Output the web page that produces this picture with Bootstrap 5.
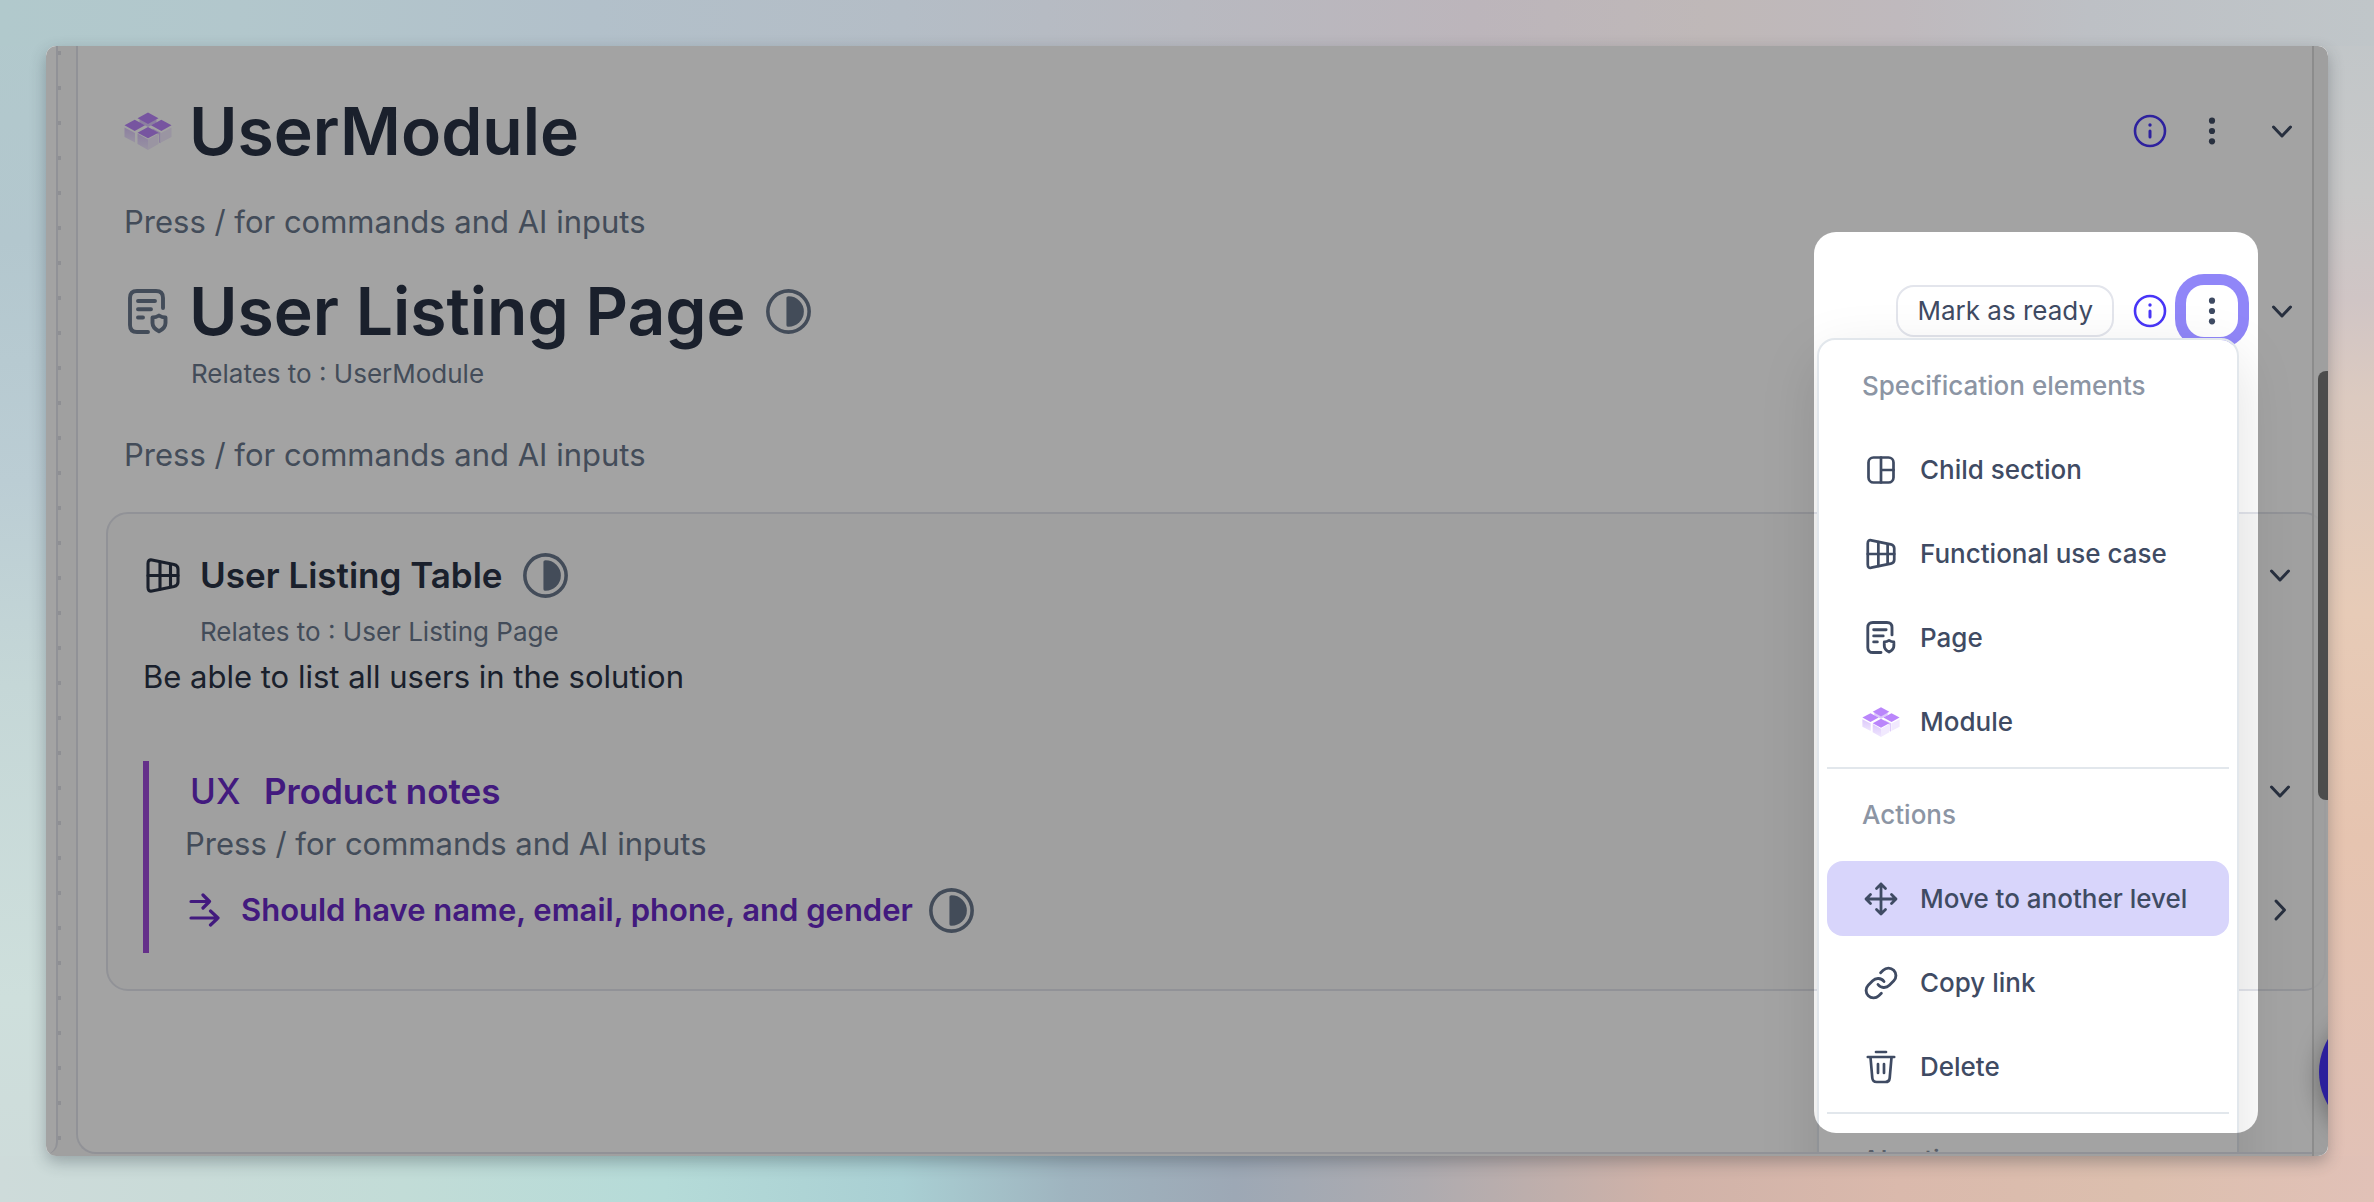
<!DOCTYPE html>
<html lang="en">
<head>
<meta charset="utf-8">
<meta name="viewport" content="width=device-width, initial-scale=1">
<title>UserModule – User Listing Page</title>
<link href="https://cdn.jsdelivr.net/npm/bootstrap@5.3.0/dist/css/bootstrap.min.css" rel="stylesheet">
<style>
  :root {
    --ink: #2a3345;
    --ink-soft: #3f4b63;
    --muted: #69778c;
    --line: #e3e5ec;
    --blue: #4835f7;
    --violet: #6829c5;
  }
  body {
    font-family: Inter, "Liberation Sans", sans-serif;
    font-size: 31px;
    line-height: 48px;
    color: var(--ink);
    background:
      linear-gradient(90deg, #b1c9cc, #b2c7cc 10%, #b2c0ca 25%, #b4bdc6 38%, #b8b9c0 50%, #bcb5bb 62%, #bfb8b8 72%, #bfb9bd 80%, #bdc0c5 88%, #c0c6c9) 0 0 / 100% 46px no-repeat,
      linear-gradient(90deg, #cedbda, #c9dbd8 8%, #c2dcd7 17%, #b5dbd8 28%, #a9cfd3 38%, #9fb4bf 45%, #9da8b5 52%, #aeabaf 60%, #d0b2a8 70%, #dab9ac 80%, #dcbfae 90%, #e1c1b7) 0 100% / 100% 46px no-repeat,
      linear-gradient(180deg, #b1c9cc, #b3c7ce 20%, #bbcdd4 40%, #c5d7d7 57%, #cedfdc 83%, #cedbda) 0 0 / 50% 100% no-repeat,
      linear-gradient(180deg, #c0c6c9, #c8c8c8 16%, #d0c5c5 25%, #dccac0 33%, #e7cbb7 51%, #e6c4b0 70%, #e1c1b7) 100% 0 / 50% 100% no-repeat;
  }
  .stage { padding: 46px; }
  .app-frame {
    background: #fafafa;
    border-radius: 10px;
    box-shadow: 0 6px 16px rgba(40, 50, 60, .32);
    padding-bottom: 2px;
  }
  .rail { width: 12px; background: #fff; border-right: 2px solid var(--line); border-bottom-right-radius: 14px; }
  .rail-dots { width: 18px; background: repeating-linear-gradient(180deg, transparent 0 5px, #dfe0e7 5px 9px, transparent 9px 35px) 0 0 / 3px 100% no-repeat; }
  .sheet {
    background: #fff;
    border: solid var(--line);
    border-width: 0 0 2px 2px;
    border-bottom-left-radius: 20px;
    padding: 45px 25px 30px 46px;
  }
  .scroll-track { width: 16px; background: rgba(248, 248, 248, .85); border-left: 2px solid #dcdcdc; }
  .scroll-thumb { top: 325px; width: 10px; height: 429px; background: #787878; border-radius: 8px 0 0 8px; }
  .fab { top: 961px; right: -121px; width: 130px; height: 130px; background: #4431f4; box-shadow: 0 6px 24px rgba(0, 0, 0, .35); }

  svg { display: block; flex: none; fill: none; stroke: currentColor; stroke-linecap: round; stroke-linejoin: round; }
  .icon-btn { width: 42px; height: 42px; padding: 0; border: 0; color: var(--ink-soft); display: flex; align-items: center; justify-content: center; }
  .icon-btn.info { color: var(--blue); }
  .head-icon { width: 48px; display: flex; justify-content: center; color: var(--muted); }
  .case-icon { width: 40px; display: flex; justify-content: center; }
  .state-icon { color: var(--muted); }
  .page-title { font-size: 66px; line-height: 80px; font-weight: 600; color: var(--ink); margin: 0; }
  .card-title-row { font-size: 35px; line-height: 52px; font-weight: 600; }
  .rule-title { font-size: 31px; line-height: 52px; font-weight: 600; }
  .relates { font-size: 26px; line-height: 40px; color: var(--muted); }
  .relates a { color: inherit; text-decoration: none; }
  .hint { color: var(--muted); margin: 0; }
  .section-hint { margin: 27px 0 25px; }
  .page-relates { margin: 3px 0 0 67px; }
  .page-hint { margin-top: 37px; }
  .case-relates { margin: 11px 0 1px 57px; }
  .notes-hint { margin: 3px 0 16px 1px; }
  .head-actions { gap: 20px; }
  .gap-title { gap: 20px; }
  .gap-icon { gap: 17px; }

  .use-case {
    background: #fafafa;
    border: 2px solid var(--line);
    border-radius: 22px;
    margin: 33px -23px 0 -18px;
    padding: 35px 23px 36px 35px;
  }
  .notes { border-left: 6px solid #9e4bd8; padding: 4px 0 17px 35px; margin-top: 60px; }
  .violet { color: var(--violet); }
  .ux-mark { width: 74px; margin-left: 6px; font-weight: 500; }

  .ready-btn {
    font-size: 26px; line-height: 36px; color: var(--ink-soft); background: #fff;
    border: 2px solid var(--line); border-radius: 18px; padding: 6px 19px; margin-right: -5px;
  }
  .more-btn { width: 52px; height: 52px; margin: 0 -5px; background: #fff; border-radius: 18px; box-shadow: 0 0 0 11px #9086f8; }
  .more-menu {
    top: 53px; right: -6px; width: 422px; padding: 8px; gap: 9px;
    border: 2px solid #e2e7ec; border-radius: 18px;
    box-shadow: 0 20px 60px rgba(0, 0, 0, .12);
    z-index: 2;
  }
  .more-menu .dropdown-header, .more-menu .dropdown-item { padding: 0 0 0 35px; height: 75px; font-size: 26px; font-weight: 500; display: flex; align-items: center; line-height: 36px; }
  .more-menu .dropdown-header { color: #8c95a4; margin: 0; }
  .more-menu .dropdown-item { color: var(--ink-soft); border-radius: 16px; gap: 20px; }
  .more-menu .dropdown-item.active { background: #d8d5fb; }
  .more-menu .dropdown-divider { margin: -1px 0; border-top: 2px solid #e2e7ec; opacity: 1; }
  .menu-icon { width: 38px; display: flex; justify-content: center; }

  .spotlight {
    top: 186px; right: 70px; width: 444px; height: 901px; border-radius: 22px;
    box-shadow: 0 0 0 3000px rgba(0, 0, 0, .36); z-index: 5; pointer-events: none;
  }
</style>
</head>
<body>
<svg width="0" height="0" class="position-absolute" aria-hidden="true">
  <defs>
    <linearGradient id="side" x1="0" y1="0" x2="0" y2="1"><stop offset="0" stop-color="#dcc8fb"/><stop offset="1" stop-color="#efe6fe"/></linearGradient>
    <symbol id="i-info" viewBox="0 0 34 34"><circle cx="17" cy="17" r="15" stroke-width="2.6"/><path d="M17 17v6" stroke-width="3"/><circle cx="17" cy="11" r="1.7" fill="currentColor" stroke="none"/></symbol>
    <symbol id="i-dots" viewBox="0 0 42 42"><g fill="currentColor" stroke="none"><circle cx="21" cy="10.7" r="3.1"/><circle cx="21" cy="21" r="3.1"/><circle cx="21" cy="31.3" r="3.1"/></g></symbol>
    <symbol id="i-down" viewBox="0 0 42 42"><path d="M12.5 17l8.5 9 8.5-9" stroke-width="3"/></symbol>
    <symbol id="i-right" viewBox="0 0 42 42"><path d="M17 12l8.5 9-8.5 9" stroke-width="3"/></symbol>
    <symbol id="i-cubes" viewBox="0 0 48 38">
      <g stroke="none">
        <path d="M0.5 15.5l10.5 5.5v9.5L0.5 25z" fill="url(#side)"/>
        <path d="M47.5 15.5l-10.5 5.5v9.5l10.5-5.5z" fill="#f1e9fe"/>
        <path d="M13.5 21.5l10.5 6v10.5l-10.5-6z" fill="url(#side)"/>
        <path d="M34.5 21.5l-10.5 6v10.5l10.5-6z" fill="#f1e9fe"/>
        <path d="M36.5 20.5l-8-4v3l6.5 3v8l1.5 .7z" fill="#dcc8fb"/>
        <path d="M24 15l-8.5-4.500v-3h17v3z" fill="#dcc8fb"/>
        <g fill="#ba86fb">
          <path d="M24 .5l10.5 5.7L24 12 13.5 6.2z"/>
          <path d="M10.7 7.8L21 13.3 10.7 19 .5 13.3z"/>
          <path d="M37.3 7.8l10.2 5.5L37.3 19 27 13.3z"/>
          <path d="M24 15l10.5 5.7L24 26.3 13.5 20.7z"/>
        </g>
      </g>
    </symbol>
    <symbol id="i-page" viewBox="0 0 40 45"><g stroke-width="3.9"><path d="M35 19V9q0-7-7-7H9Q2 2 2 9v27q0 7 7 7h11"/><path d="M10 12h17M10 20.3h13M10 28.5h5"/><path d="M31 26.5q-3 2-6.500 2v5.5q0 5 6.5 8.3 6.5-3.3 6.5-8.3v-5.5q-3.500 0-6.500-2z"/></g></symbol>
    <symbol id="i-window" viewBox="0 0 34 35"><g stroke-width="3.1"><path d="M2 5.5Q2 1.3 6 2l22 4.500q4 1 4 4.500v13q0 3.5-4 4.5L6 33q-4 .7-4-3.5z"/><path d="M14 4v27M24.5 6.5v22M2 17.5h30"/></g></symbol>
    <symbol id="i-section" viewBox="0 0 28 28"><g stroke-width="2.7"><rect x="1.5" y="1.5" width="25" height="25" rx="5"/><path d="M14 1.5v25M14 14h12.5"/></g></symbol>
    <symbol id="i-half" viewBox="0 0 44 44"><circle cx="22" cy="22" r="20.2" stroke-width="3.5"/><path d="M20 8.500q0-1.500 2-1.500a15 15 0 0 1 0 30q-2 0-2-1.500z" fill="currentColor" stroke="none"/></symbol>
    <symbol id="i-flow" viewBox="0 0 31 34"><path d="M2 8.5h18.500M14 2l6.500 6.500L14 15M2 25h27M21.500 18l7.500 7-7.500 7" stroke-width="3.2"/></symbol>
    <symbol id="i-move" viewBox="0 0 34 34"><path d="M17 2v30M2 17h30M12.5 6.500L17 2l4.500 4.500M12.500 27.500L17 32l4.500-4.500M6.500 12.500L2 17l4.500 4.500M27.500 12.500L32 17l-4.500 4.500" stroke-width="2.8"/></symbol>
    <symbol id="i-link" viewBox="0 0 24 24"><path d="M10 13a5 5 0 0 0 7.54.54l3-3a5 5 0 0 0-7.07-7.07l-1.72 1.71M14 11a5 5 0 0 0-7.54-.54l-3 3a5 5 0 0 0 7.07 7.07l1.71-1.71" stroke-width="1.9"/></symbol>
    <symbol id="i-trash" viewBox="0 0 30 34"><path d="M1.8 7h26.4M10 2h10M4.500 7.500l1.800 20.500q.4 4 4.400 4h8.600q4 0 4.400-4l1.800-20.500M12 14v9M18 14v9" stroke-width="2.7"/></symbol>
  </defs>
</svg>

<div class="stage min-vh-100 d-flex">
  <main class="app-frame flex-grow-1 d-flex position-relative overflow-hidden">
    <div class="rail flex-shrink-0"></div>
    <div class="rail-dots flex-shrink-0"></div>

    <div class="sheet flex-grow-1 overflow-hidden">
      <header class="d-flex align-items-center justify-content-between">
        <div class="d-flex align-items-center gap-icon">
          <span class="head-icon"><svg width="48" height="38"><use href="#i-cubes"/></svg></span>
          <h1 class="page-title">UserModule</h1>
        </div>
        <div class="head-actions d-flex align-items-center">
          <button type="button" class="btn icon-btn info" aria-label="Info"><svg width="34" height="34"><use href="#i-info"/></svg></button>
          <button type="button" class="btn icon-btn" aria-label="More"><svg width="42" height="42"><use href="#i-dots"/></svg></button>
          <button type="button" class="btn icon-btn ms-2" aria-label="Collapse"><svg width="42" height="42"><use href="#i-down"/></svg></button>
        </div>
      </header>
      <p class="hint section-hint">Press / for commands and AI inputs</p>

      <header class="d-flex align-items-center justify-content-between">
        <div class="d-flex align-items-center gap-icon">
          <span class="head-icon"><svg width="40" height="45"><use href="#i-page"/></svg></span>
          <div class="d-flex align-items-center gap-title">
            <h1 class="page-title">User Listing Page</h1>
            <svg class="state-icon" width="45" height="45"><use href="#i-half"/></svg>
          </div>
        </div>
        <div class="head-actions d-flex align-items-center">
          <button type="button" class="btn ready-btn">Mark as ready</button>
          <button type="button" class="btn icon-btn info" aria-label="Info"><svg width="34" height="34"><use href="#i-info"/></svg></button>
          <div class="dropdown">
            <button type="button" class="btn icon-btn more-btn" aria-label="More" aria-expanded="true"><svg width="42" height="42"><use href="#i-dots"/></svg></button>
            <div class="dropdown-menu show more-menu d-flex flex-column">
              <h2 class="dropdown-header">Specification elements</h2>
              <button type="button" class="dropdown-item"><span class="menu-icon"><svg width="28" height="28"><use href="#i-section"/></svg></span>Child section</button>
              <button type="button" class="dropdown-item"><span class="menu-icon"><svg width="30" height="34"><use href="#i-window"/></svg></span>Functional use case</button>
              <button type="button" class="dropdown-item"><span class="menu-icon"><svg width="30" height="33"><use href="#i-page"/></svg></span>Page</button>
              <button type="button" class="dropdown-item"><span class="menu-icon"><svg width="38" height="32"><use href="#i-cubes"/></svg></span>Module</button>
              <hr class="dropdown-divider">
              <h2 class="dropdown-header">Actions</h2>
              <button type="button" class="dropdown-item active"><span class="menu-icon"><svg width="34" height="34"><use href="#i-move"/></svg></span>Move to another level</button>
              <button type="button" class="dropdown-item"><span class="menu-icon"><svg width="36" height="36"><use href="#i-link"/></svg></span>Copy link</button>
              <button type="button" class="dropdown-item"><span class="menu-icon"><svg width="30" height="34"><use href="#i-trash"/></svg></span>Delete</button>
              <hr class="dropdown-divider">
              <h2 class="dropdown-header">AI actions</h2>
            </div>
          </div>
          <button type="button" class="btn icon-btn ms-2" aria-label="Collapse"><svg width="42" height="42"><use href="#i-down"/></svg></button>
        </div>
      </header>
      <div class="relates page-relates">Relates to : <a href="#">UserModule</a></div>
      <p class="hint page-hint">Press / for commands and AI inputs</p>

      <section class="use-case">
        <div class="card-title-row d-flex align-items-center justify-content-between">
          <div class="d-flex align-items-center gap-icon">
            <span class="case-icon"><svg width="34" height="35"><use href="#i-window"/></svg></span>
            <span class="d-flex align-items-center gap-title">User Listing Table <svg class="state-icon" width="45" height="45"><use href="#i-half"/></svg></span>
          </div>
          <button type="button" class="btn icon-btn" aria-label="Collapse"><svg width="42" height="42"><use href="#i-down"/></svg></button>
        </div>
        <div class="relates case-relates">Relates to : <a href="#">User Listing Page</a></div>
        <div>Be able to list all users in the solution</div>

        <div class="notes">
          <div class="card-title-row violet d-flex align-items-center justify-content-between">
            <div class="d-flex align-items-center"><span class="ux-mark">UX</span>Product notes</div>
            <button type="button" class="btn icon-btn" aria-label="Collapse"><svg width="42" height="42"><use href="#i-down"/></svg></button>
          </div>
          <p class="hint notes-hint">Press / for commands and AI inputs</p>
          <div class="rule-title violet d-flex align-items-center justify-content-between">
            <div class="d-flex align-items-center gap-icon">
              <span class="case-icon"><svg width="31" height="34"><use href="#i-flow"/></svg></span>
              <span class="d-flex align-items-center gap-3">Should have name, email, phone, and gender <svg class="state-icon" width="45" height="45"><use href="#i-half"/></svg></span>
            </div>
            <button type="button" class="btn icon-btn" aria-label="Expand"><svg width="42" height="42"><use href="#i-right"/></svg></button>
          </div>
        </div>
      </section>
    </div>

    <div class="scroll-track position-absolute top-0 end-0 h-100"></div>
    <div class="scroll-thumb position-absolute end-0"></div>
    <button type="button" class="fab btn border-0 rounded-circle position-absolute" aria-label="Open assistant"></button>
    <div class="spotlight position-absolute"></div>
  </main>
</div>
<script src="https://cdn.jsdelivr.net/npm/bootstrap@5.3.0/dist/js/bootstrap.bundle.min.js"></script>
</body>
</html>
